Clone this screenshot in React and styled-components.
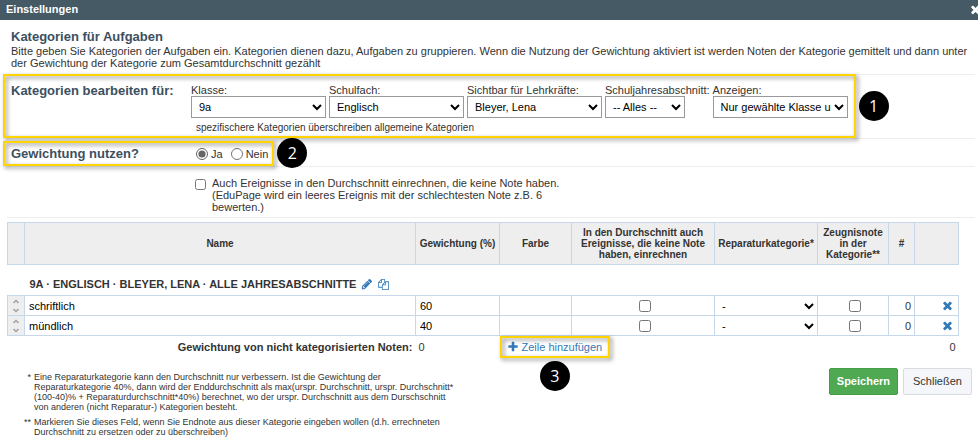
import { useState } from "react";
import styled, { createGlobalStyle } from "styled-components";

const initialRows = [
  { id: 1, name: "schriftlich", weight: "60" },
  { id: 2, name: "mündlich", weight: "40" },
];

const filters = [
  { id: "klasse", label: "Klasse:", value: "9a" },
  { id: "fach", label: "Schulfach:", value: "Englisch" },
  { id: "lehrer", label: "Sichtbar für Lehrkräfte:", value: "Bleyer, Lena" },
  { id: "abschnitt", label: "Schuljahresabschnitt:", value: "-- Alles --", small: true },
  { id: "anzeigen", label: "Anzeigen:", value: "Nur gewählte Klasse u" },
];

const icons = {
  times:
    "M1490 1322q0 40-28 68l-136 136q-28 28-68 28t-68-28l-294-294-294 294q-28 28-68 28t-68-28l-136-136q-28-28-28-68t28-68l294-294-294-294q-28-28-28-68t28-68l136-136q28-28 68-28t68 28l294 294 294-294q28-28 68-28t68 28l136 136q28 28 28 68t-28 68l-294 294 294 294q28 28 28 68z",
  pencil:
    "M491 1536l91-91-235-235-91 91v107h128v128h107zm523-928q0-22-22-22-10 0-17 7l-542 542q-7 7-7 17 0 22 22 22 10 0 17-7l542-542q7-7 7-17zm-54-192l416 416-832 832h-416v-416zm683 96q0 53-37 90l-166 166-416-416 166-165q36-38 90-38 53 0 91 38l235 234q37 39 37 91z",
  copy:
    "M1696 384q40 0 68 28t28 68v1216q0 40-28 68t-68 28h-960q-40 0-68-28t-28-68v-288h-544q-40 0-68-28t-28-68v-672q0-40 20-88t48-76l408-408q28-28 76-48t88-20h416q40 0 68 28t28 68v328q68-40 128-40h416zm-544 213l-299 299h299v-299zm-640-384l-299 299h299v-299zm196 647l316-316v-416h-384v416q0 40-28 68t-68 28h-416v640h512v-256q0-40 20-88t48-76zm956 804v-1152h-384v416q0 40-28 68t-68 28h-416v640h896z",
  plus:
    "M1600 736v192q0 40-28 68t-68 28h-416v416q0 40-28 68t-68 28h-192q-40 0-68-28t-28-68v-416h-416q-40 0-68-28t-28-68v-192q0-40 28-68t68-28h416v-416q0-40 28-68t68-28h192q40 0 68 28t28 68v416h416q40 0 68 28t28 68z",
};

function Icon({ name, size = 12 }) {
  return (
    <svg width={size} height={size} viewBox="0 0 1792 1792" fill="currentColor" aria-hidden="true">
      <path d={icons[name]} />
    </svg>
  );
}

export default function App() {
  const [rows, setRows] = useState(initialRows);
  const [weighting, setWeighting] = useState("ja");

  function updateRow(id, key, value) {
    setRows(rows.map((row) => (row.id === id ? { ...row, [key]: value } : row)));
  }

  function addRow(e) {
    e.preventDefault();
    setRows([...rows, { id: Date.now(), name: "", weight: "" }]);
  }

  return (
    <>
      <GlobalStyle />
      <TitleBar>
        <h1>Einstellungen</h1>
        <CloseButton aria-label="Fenster schließen">
          <Icon name="times" size={13} />
        </CloseButton>
      </TitleBar>
      <Content>
        <Intro>
          <Heading>Kategorien für Aufgaben</Heading>
          <p>
            Bitte geben Sie Kategorien der Aufgaben ein. Kategorien dienen dazu, Aufgaben zu
            gruppieren. Wenn die Nutzung der Gewichtung aktiviert ist werden Noten der Kategorie
            gemittelt und dann unter der Gewichtung der Kategorie zum Gesamtdurchschnitt gezählt
          </p>
        </Intro>

        <Section>
          <FilterArea>
            <Heading>Kategorien bearbeiten für:</Heading>
            <div>
              <Filters>
                {filters.map((f) => (
                  <Field key={f.id}>
                    <label htmlFor={f.id}>{f.label}</label>
                    <Select id={f.id} $small={f.small}>
                      <option>{f.value}</option>
                    </Select>
                  </Field>
                ))}
              </Filters>
              <Hint>spezifischere Kategorien überschreiben allgemeine Kategorien</Hint>
            </div>
            <Highlight $bleed />
            <SideBadge>1</SideBadge>
          </FilterArea>
        </Section>

        <Section>
          <WeightingArea>
            <Heading>Gewichtung nutzen?</Heading>
            <Radios>
              <label>
                <input
                  type="radio"
                  name="weighting"
                  checked={weighting === "ja"}
                  onChange={() => setWeighting("ja")}
                />
                Ja
              </label>
              <label>
                <input
                  type="radio"
                  name="weighting"
                  checked={weighting === "nein"}
                  onChange={() => setWeighting("nein")}
                />
                Nein
              </label>
            </Radios>
            <Highlight $bleed />
            <SideBadge>2</SideBadge>
          </WeightingArea>
        </Section>

        <Section>
          <EmptyEvents>
            <input type="checkbox" />
            <span>
              Auch Ereignisse in den Durchschnitt einrechnen, die keine Note haben. (EduPage wird
              ein leeres Ereignis mit der schlechtesten Note z.B. 6 bewerten.)
            </span>
          </EmptyEvents>
        </Section>

        <Section>
          <Table>
            <colgroup>
              <Col $w={17} />
              <Col />
              <Col $w={84} />
              <Col $w={72} />
              <Col $w={143} />
              <Col $w={103} />
              <Col $w={71} />
              <Col $w={26} />
              <Col $w={44} />
            </colgroup>
            <thead>
              <tr>
                <Th />
                <Th>Name</Th>
                <Th>Gewichtung (%)</Th>
                <Th>Farbe</Th>
                <Th>In den Durchschnitt auch Ereignisse, die keine Note haben, einrechnen</Th>
                <Th>Reparaturkategorie*</Th>
                <Th>Zeugnisnote in der Kategorie**</Th>
                <Th>#</Th>
                <Th />
              </tr>
            </thead>
            <tbody>
              <tr>
                <GroupCell colSpan={9}>
                  <Group>
                    9A · ENGLISCH · BLEYER, LENA · ALLE JAHRESABSCHNITTE
                    <IconButton aria-label="Bearbeiten">
                      <Icon name="pencil" />
                    </IconButton>
                    <IconButton aria-label="Kopieren">
                      <Icon name="copy" size={11} />
                    </IconButton>
                  </Group>
                </GroupCell>
              </tr>
              {rows.map((row) => (
                <tr key={row.id}>
                  <Td $handle>
                    <Handle viewBox="0 0 8 14" aria-hidden="true">
                      <path d="M1.5 4 4 1.5 6.5 4M1.5 10 4 12.5 6.5 10" />
                    </Handle>
                  </Td>
                  <Td>
                    <TextInput
                      aria-label="Name"
                      value={row.name}
                      onChange={(e) => updateRow(row.id, "name", e.target.value)}
                    />
                  </Td>
                  <Td>
                    <TextInput
                      aria-label="Gewichtung (%)"
                      value={row.weight}
                      onChange={(e) => updateRow(row.id, "weight", e.target.value)}
                    />
                  </Td>
                  <Td />
                  <Td $align="center">
                    <Check aria-label="In den Durchschnitt einrechnen" />
                  </Td>
                  <Td $flush>
                    <RepairSelect aria-label="Reparaturkategorie">
                      <option>-</option>
                    </RepairSelect>
                  </Td>
                  <Td $align="center">
                    <Check aria-label="Zeugnisnote in der Kategorie" />
                  </Td>
                  <Td $align="right">0</Td>
                  <Td $align="right">
                    <IconButton
                      aria-label="Zeile löschen"
                      onClick={() => setRows(rows.filter((r) => r.id !== row.id))}
                    >
                      <Icon name="times" size={13} />
                    </IconButton>
                  </Td>
                </tr>
              ))}
            </tbody>
            <tfoot>
              <tr>
                <FootCell colSpan={2} $align="right">
                  <b>Gewichtung von nicht kategorisierten Noten:</b>
                </FootCell>
                <FootCell>0</FootCell>
                <LinkCell colSpan={2}>
                  <AddRow>
                    <a href="#zeile" onClick={addRow}>
                      <Icon name="plus" />
                      Zeile hinzufügen
                    </a>
                    <Highlight />
                    <BottomBadge>3</BottomBadge>
                  </AddRow>
                </LinkCell>
                <FootCell colSpan={4} $align="right">
                  0
                </FootCell>
              </tr>
            </tfoot>
          </Table>
        </Section>

        <Footer>
          <Notes>
            <span>*</span>
            <p>
              Eine Reparaturkategorie kann den Durchschnitt nur verbessern. Ist die Gewichtung der
              Reparaturkategorie 40%, dann wird der Enddurchschnitt als max(urspr. Durchschnitt,
              urspr. Durchschnitt*
              <wbr />
              (100-40)% + Reparaturdurchschnitt*40%) berechnet, wo der urspr. Durchschnitt aus dem
              Durschschnitt von anderen (nicht Reparatur-) Kategorien besteht.
            </p>
            <span>**</span>
            <p>
              Markieren Sie dieses Feld, wenn Sie Endnote aus dieser Kategorie eingeben wollen (d.h.
              errechneten Durchschnitt zu ersetzen oder zu überschreiben)
            </p>
          </Notes>
          <Actions>
            <Button $primary>Speichern</Button>
            <Button>Schließen</Button>
          </Actions>
        </Footer>
      </Content>
    </>
  );
}

const GlobalStyle = createGlobalStyle`
  * {
    box-sizing: border-box;
    margin: 0;
  }

  body {
    background: #ffffff;
    color: #333333;
    font-family: "Liberation Sans", Arial, sans-serif;
    font-size: 11px;
    line-height: 12px;
  }

  input, select, button {
    font: inherit;
    color: inherit;
  }
`;

const TitleBar = styled.header`
  display: flex;
  align-items: center;
  justify-content: space-between;
  height: 20px;
  padding: 0 0 2px 6px;
  overflow: hidden;
  background: #455a64;
  color: #ffffff;

  h1 {
    font-size: 11px;
    line-height: 12px;
  }
`;

const IconButton = styled.button`
  display: inline-flex;
  padding: 0;
  border: none;
  background: none;
  color: #337ab7;
  cursor: pointer;
`;

const CloseButton = styled(IconButton)`
  margin-right: -4px;
  color: #ffffff;
`;

const Content = styled.main`
  padding: 0 3px 0 7px;
`;

const Intro = styled.div`
  padding: 9px 4px 5px;
`;

const Heading = styled.h2`
  color: #3c4f60;
  font-size: 13px;
  line-height: 16px;
`;

const Section = styled.section`
  border-top: 1px solid #eeeeee;
`;

const Marked = styled.div`
  position: relative;
  display: flex;
  width: fit-content;
  margin-left: 4px;

  ${Heading} {
    width: 180px;
  }
`;

const FilterArea = styled(Marked)`
  padding: 8px 8px 4px 0;
`;

const WeightingArea = styled(Marked)`
  align-items: center;
  height: 24px;
  margin-top: 3px;
  padding-right: 6px;
`;

const Highlight = styled.span`
  position: absolute;
  inset: ${(props) => (props.$bleed ? "-1px 0 0 -8px" : "0")};
  border: 2px solid #ffd400;
  filter: drop-shadow(2px 2px 2px rgba(0, 0, 0, 0.5));
  pointer-events: none;
`;

const Badge = styled.span`
  position: absolute;
  display: flex;
  align-items: center;
  justify-content: center;
  width: 30px;
  height: 30px;
  border-radius: 50%;
  background: #000000;
  color: #ffffff;
  font-family: "Open Sans", "Noto Sans", sans-serif;
  font-size: 16px;
`;

const SideBadge = styled(Badge)`
  top: calc(50% - 16px);
  left: calc(100% + 3px);
`;

const BottomBadge = styled(Badge)`
  top: calc(100% + 3px);
  left: calc(50% - 15px);
`;

const Filters = styled.div`
  display: flex;
  gap: 3px;
`;

const Field = styled.div`
  display: flex;
  flex-direction: column;
  padding-top: 1px;
`;

const Select = styled.select`
  width: ${(props) => (props.$small ? "80px" : "135px")};
  height: 22px;
  padding: 0 0 0 3px;
  border: 1px solid #999999;
  border-radius: 0;
  background-color: #ffffff;
  color: #000000;
`;

const Hint = styled.p`
  padding: 4px 5px 0;
  font-size: 10px;
`;

const Radios = styled.div`
  display: flex;
  gap: 8px;
  padding-left: 5px;

  label {
    display: flex;
    align-items: center;
    gap: 3px;
  }

  input {
    width: 12px;
    height: 12px;
    margin: 0;
    accent-color: #666666;
  }
`;

const EmptyEvents = styled.label`
  display: flex;
  gap: 6px;
  max-width: 560px;
  padding: 10px 0 4px 188px;

  input {
    flex: none;
    width: 11px;
    height: 11px;
    margin: 2px 0 0;
  }
`;

const Table = styled.table`
  width: calc(100% - 16px);
  margin-top: 4px;
  border-collapse: collapse;
  table-layout: fixed;
`;

const Col = styled.col`
  width: ${(props) => (props.$w ? `${props.$w}px` : "auto")};
`;

const Th = styled.th`
  height: 42px;
  padding: 0 3px;
  border: 1px solid #c5d7e9;
  background: #eeeeee;
  font-size: 10px;
  line-height: 11px;
`;

const Td = styled.td`
  height: 20px;
  padding: ${(props) => (props.$flush ? "0" : "0 3px")};
  border: 1px solid #c5d7e9;
  background: ${(props) => (props.$handle ? "#eeeeee" : "#ffffff")};
  text-align: ${(props) => props.$align || "left"};

  ${IconButton} {
    padding-right: 1px;
    vertical-align: middle;
  }
`;

const GroupCell = styled.td`
  height: 31px;
  padding: 8px 0 0 22px;
`;

const Group = styled.div`
  display: flex;
  align-items: center;
  gap: 5px;
  font-weight: bold;
`;

const Handle = styled.svg`
  display: block;
  width: 8px;
  height: 14px;
  margin: 0 auto;
  fill: none;
  stroke: #a0a0a0;
  stroke-width: 1.5;
`;

const TextInput = styled.input`
  display: block;
  width: 100%;
  padding: 0 1px;
  border: none;
  background: none;
  color: #000000;
`;

const Check = styled.input.attrs({ type: "checkbox" })`
  width: 12px;
  height: 12px;
  margin: 0 0 0 4px;
  vertical-align: middle;
`;

const RepairSelect = styled.select`
  display: block;
  width: 100%;
  height: 18px;
  padding-left: 3px;
  border: none;
  background: none;
  color: #000000;
`;

const FootCell = styled.td`
  height: 23px;
  padding: 0 3px;
  text-align: ${(props) => props.$align || "left"};
`;

const LinkCell = styled.td`
  padding: 0;
`;

const AddRow = styled.div`
  position: relative;
  display: flex;
  width: fit-content;
  height: 22px;
  padding: 0 8px 0 7px;

  a {
    display: flex;
    align-items: center;
    gap: 3px;
    color: #337ab7;
    text-decoration: none;
  }
`;

const Footer = styled.footer`
  display: flex;
  align-items: flex-start;
  justify-content: space-between;
  padding: 9px 3px 0 12px;
`;

const Notes = styled.div`
  display: grid;
  grid-template-columns: 12px 421px;
  gap: 5px 3px;
  padding-top: 4px;
  font-size: 9px;
  line-height: 10px;

  span {
    text-align: right;
  }
`;

const Actions = styled.div`
  display: flex;
  gap: 5px;
`;

const Button = styled.button`
  min-width: 69px;
  height: 27px;
  padding: 0 7px;
  border: 1px solid ${(props) => (props.$primary ? "#449d48" : "#d8dbe0")};
  border-radius: 2px;
  background: ${(props) => (props.$primary ? "#4fa953" : "#f5f6fa")};
  color: ${(props) => (props.$primary ? "#ffffff" : "#333333")};
  font-weight: ${(props) => (props.$primary ? "bold" : "normal")};
  cursor: pointer;
`;
